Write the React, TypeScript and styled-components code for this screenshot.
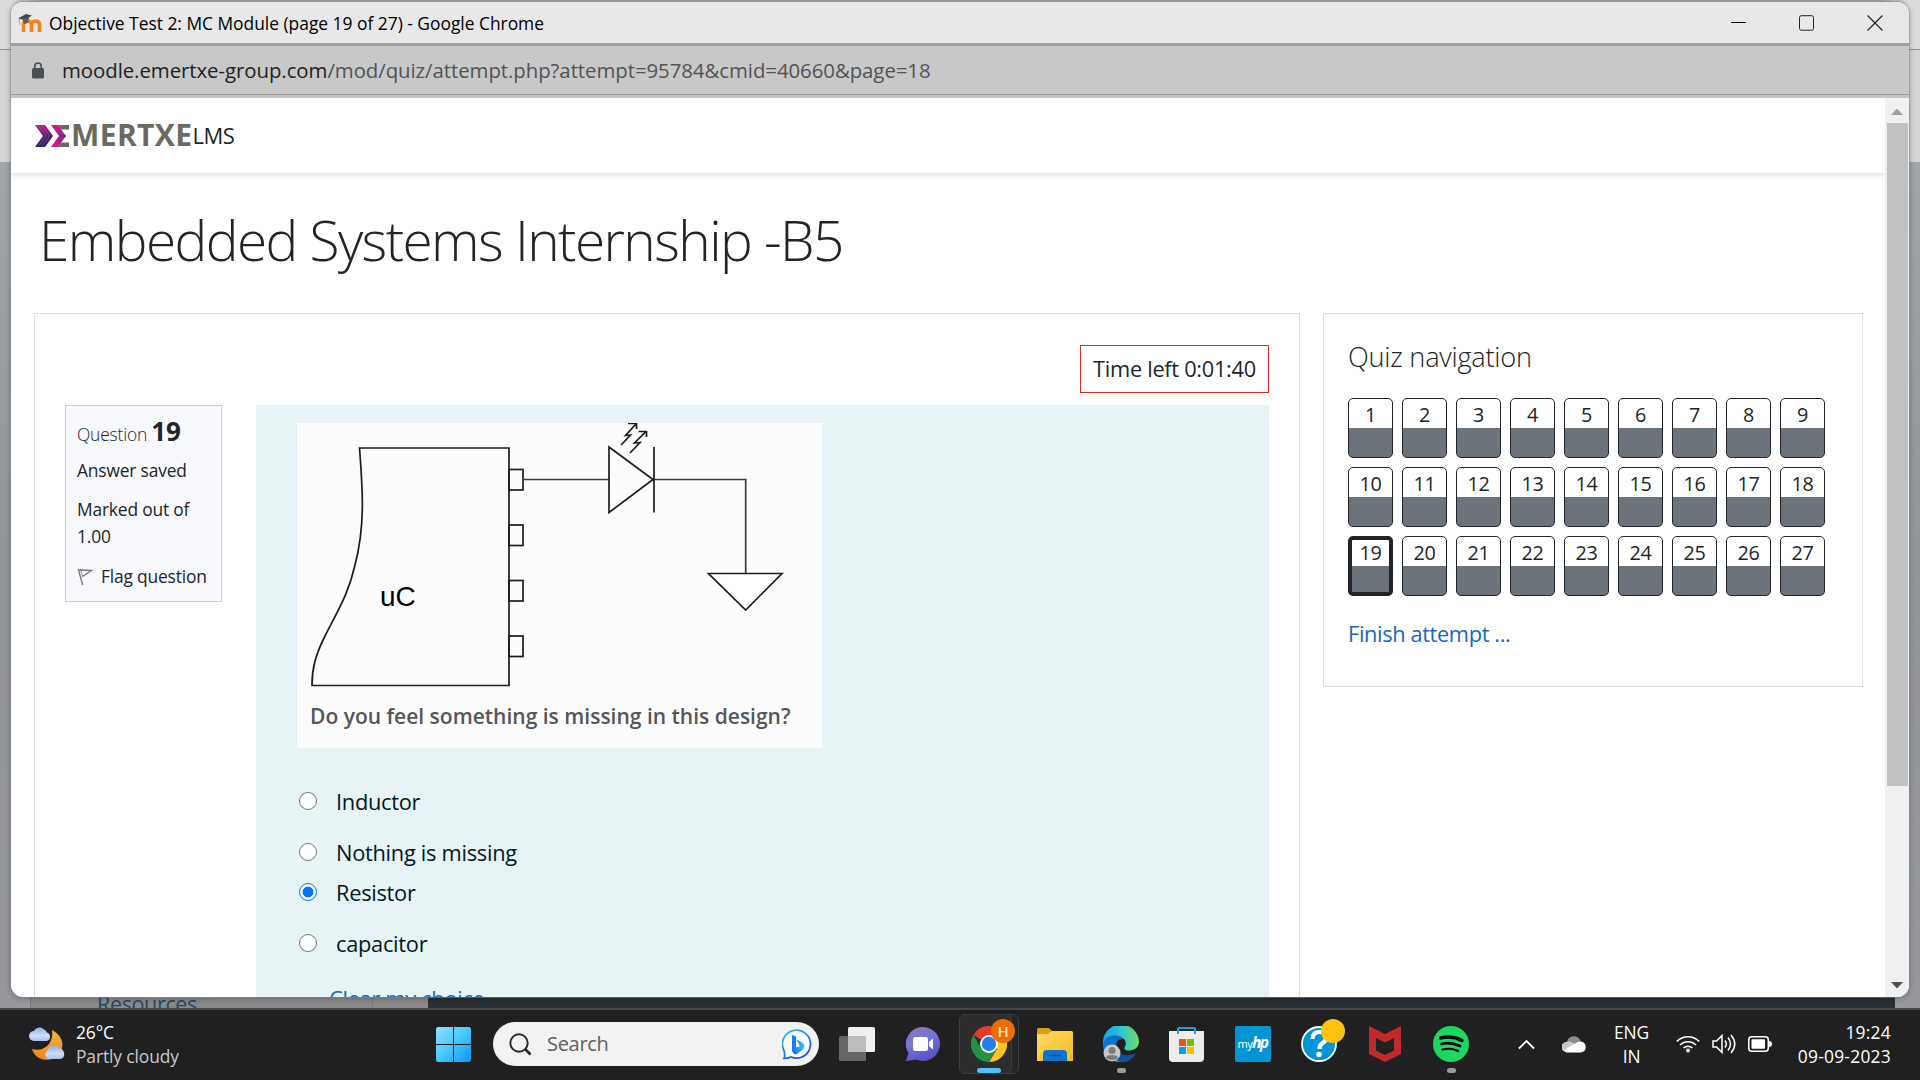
import React from "react";
import styled, { createGlobalStyle } from "styled-components";

const Global = createGlobalStyle`
  * { box-sizing: border-box; }
  body { margin: 0; overflow: hidden; background: #202020; font-family: "Open Sans", "Noto Sans", sans-serif; }
`;

const Screen = styled.div`
  width: 1920px;
  height: 1080px;
  display: flex;
  flex-direction: column;
  position: relative;
  overflow: hidden;
`;

/* ---------- browser window behind the popup ---------- */
const Backdrop = styled.div`
  height: 1008px;
  display: flex;
  flex-direction: column;
  overflow: hidden;
`;
const BackTabs = styled.div`
  height: 50px;
  flex: none;
  background: linear-gradient(90deg, #dcdcdc 0 11px, #a6a6a6 40px 1880px, #dcdcdc 1909px);
  border-bottom: 1px solid #8f8f8f;
`;
const BackTools = styled.div`
  height: 112px;
  flex: none;
  background: #d4d4d4;
`;
const BackPage = styled.div`
  flex: 1;
  display: flex;
  flex-direction: column;
  justify-content: flex-end;
  background: linear-gradient(#a1a5a8, #939699 50%, #97999c);
`;
const BackBottom = styled.div`
  height: 30px;
  display: flex;
`;
const BackSide = styled.div`
  width: 343px;
  margin-left: 30px;
  height: 30px;
  padding: 11px 0 0 66px;
  border: solid #77797b;
  border-width: 0 1px;
  background: #87898b;
  color: #234a66;
  font-size: 21.5px;
  line-height: 30px;
  letter-spacing: -0.35px;
  overflow: hidden;
`;
const BackMid = styled.div`
  width: 55px;
  background: #87898a;
`;
const BackDark = styled.div`
  flex: 1;
  margin-right: 25px;
  background: #2b3034;
`;

/* ---------- popup window ---------- */
const Popup = styled.div`
  position: absolute;
  left: 11px;
  top: 2px;
  width: 1898px;
  height: 995px;
  display: flex;
  flex-direction: column;
  border-radius: 12px;
  overflow: hidden;
  background: #fff;
`;
const PopupShadow = styled.div`
  position: absolute;
  left: 11px;
  top: 2px;
  width: 1898px;
  height: 995px;
  border-radius: 12px;
  box-shadow: 0 0 0 1px #8e8e8e80, 0 1px 6px #00000055;
`;
const TitleBar = styled.div`
  height: 44px;
  flex: none;
  display: flex;
  align-items: center;
  padding: 0 0 0 7px;
  background: #e8e8e8;
  border-bottom: 3px solid #a0a0a0;
`;
const TitleText = styled.div`
  flex: 1;
  margin-left: 7px;
  font-size: 17.4px;
  line-height: 24px;
  letter-spacing: -0.01px;
  color: #000;
`;
const WindowButtons = styled.div`
  display: flex;
  gap: 53px;
  margin-right: 26px;
`;
const AddressBar = styled.div`
  height: 52px;
  flex: none;
  display: flex;
  align-items: center;
  gap: 18px;
  padding: 0 20px 4px 21px;
  background: linear-gradient(#c8c8c8 48px, #999 48px 49px, #c4c4c4 49px);
`;
const Url = styled.div`
  font-size: 20.4px;
  line-height: 26px;
  letter-spacing: -0.06px;
  color: #505357;
  b { font-weight: 400; color: #202124; }
`;
const Viewport = styled.div`
  flex: 1;
  min-height: 0;
  display: flex;
`;
const Page = styled.div`
  width: 1874px;
  overflow: hidden;
`;
const Scrollbar = styled.div`
  width: 24px;
  display: flex;
  flex-direction: column;
  align-items: center;
  background: #f0f0f0;
`;
const Arrow = styled.div`
  height: 25px;
  padding-top: 10px;
  line-height: 0;
`;
const Thumb = styled.div`
  width: 21px;
  height: 663px;
  background: #c1c1c1;
  margin-bottom: auto;
`;

const SiteHeader = styled.header`
  height: 75px;
  display: flex;
  align-items: center;
  padding: 0 24px;
  background: #fff;
  box-shadow: 0 2px 6px rgba(0, 0, 0, 0.12);
`;
const Brand = styled.div`
  display: flex;
  align-items: center;
  height: 40px;
`;
const BrandName = styled.span`
  margin-left: 1px;
  padding-bottom: 2px;
  font-size: 30px;
  line-height: 38px;
  font-weight: 700;
  letter-spacing: 0.4px;
  color: #6a6a60;
`;
const BrandSuffix = styled.span`
  font-size: 22px;
  line-height: 38px;
  padding-bottom: 2px;
  letter-spacing: -0.5px;
  color: #212529;
`;
const CourseTitle = styled.h1`
  margin: 33px 0 0 28px;
  font-size: 55px;
  font-weight: 300;
  line-height: 67px;
  letter-spacing: -1.57px;
  color: #212529;
`;
const Columns = styled.div`
  display: flex;
  align-items: flex-start;
  gap: 23px;
  padding: 40px 22px 0 23px;
`;
const QuizCard = styled.section`
  width: 1266px;
  height: 900px;
  padding: 31px 30px;
  border: 1px solid #dedfe0;
`;
const TimerRow = styled.div`
  display: flex;
  justify-content: flex-end;
`;
const Timer = styled.div`
  width: 189px;
  height: 48px;
  border: 1px solid #ca3120;
  text-align: center;
  font-size: 21.8px;
  line-height: 46px;
  letter-spacing: -0.3px;
  color: #212529;
  white-space: nowrap;
`;
const QuestionRow = styled.div`
  display: flex;
  align-items: flex-start;
  gap: 34px;
  margin-top: 12px;
`;
const Info = styled.aside`
  width: 157px;
  height: 197px;
  padding: 10px 0 0 11px;
  border: 1px solid #cad0d7;
  background: #f8f9fc;
  color: #212529;
  font-size: 17.4px;
  line-height: 27px;
  letter-spacing: -0.18px;
  white-space: nowrap;
`;
const InfoNo = styled.h3`
  margin: 0 0 8px;
  font-size: 17.4px;
  line-height: 30px;
  font-weight: 300;
  span { font-size: 26px; font-weight: 700; line-height: 30px; letter-spacing: -0.3px; }
`;
const InfoText = styled.div`
  margin-bottom: 12px;
`;
const FlagRow = styled.div`
  display: flex;
  align-items: center;
  gap: 8px;
  margin-top: 13px;
`;
const Formulation = styled.div`
  flex: 1;
  height: 800px;
  padding: 18px 41px;
  background: #e7f3f5;
  color: #001a1e;
`;
const Figure = styled.div`
  width: 525px;
  height: 325px;
  background: #fcfcfc;
  svg { display: block; }
`;
const Caption = styled.div`
  padding-left: 13px;
  font-size: 21px;
  font-weight: 600;
  line-height: 30px;
  color: #55565a;
  white-space: nowrap;
`;
const Options = styled.div`
  margin-top: 36px;
`;
const Option = styled.label<{ $gap: number }>`
  display: flex;
  align-items: center;
  gap: 19px;
  height: 34px;
  margin: 0 0 ${(p) => p.$gap}px 2px;
  font-size: 21.8px;
  line-height: 32px;
  letter-spacing: -0.27px;
  span + span { padding-top: 2px; }
`;
const Radio = styled.span<{ $on?: boolean }>`
  width: 18px;
  height: 18px;
  border-radius: 50%;
  border: 1.5px solid ${(p) => (p.$on ? "#0075ff" : "#767676")};
  background: ${(p) => (p.$on ? "radial-gradient(circle, #0075ff 5px, #fff 5.8px)" : "#fff")};
`;
const ClearLink = styled.a`
  display: block;
  margin: 22px 0 0 32px;
  font-size: 21.8px;
  line-height: 34px;
  letter-spacing: -0.3px;
  color: #1a66bf;
`;

const NavCard = styled.aside`
  width: 540px;
  height: 374px;
  padding: 26px 24px;
  border: 1px solid #dedfe0;
`;
const NavTitle = styled.h5`
  margin: 0;
  font-size: 27.2px;
  font-weight: 300;
  line-height: 34px;
  letter-spacing: -0.25px;
  color: #212529;
`;
const NavGrid = styled.div`
  display: grid;
  grid-template-columns: repeat(9, 45px);
  gap: 9px;
  margin-top: 24px;
`;
const NavButton = styled.a<{ $current?: boolean }>`
  height: 60px;
  border: ${(p) => (p.$current ? "4px" : "1px")} solid #212529;
  border-radius: 5px;
  background: linear-gradient(#fff 30px, #6c737b 30px) border-box;
  text-align: center;
  font-size: 19.8px;
  line-height: ${(p) => (p.$current ? 26 : 32)}px;
  letter-spacing: -0.4px;
  color: #212529;
`;
const FinishLink = styled.a`
  display: block;
  margin-top: 21px;
  font-size: 21.8px;
  line-height: 34px;
  letter-spacing: -0.37px;
  color: #1a66bf;
`;

/* ---------- taskbar ---------- */
const Taskbar = styled.div`
  height: 72px;
  flex: none;
  display: flex;
  align-items: center;
  padding: 0 29px 2px 28px;
  background: #202020;
  border-top: 2px solid #454545;
  color: #fff;
  font-size: 17.4px;
  line-height: 24px;
  letter-spacing: -0.1px;
`;
const Weather = styled.div`
  width: 408px;
  display: flex;
  align-items: center;
  gap: 10px;
`;
const Lines = styled.div<{ $align?: string }>`
  text-align: ${(p) => p.$align || "left"};
  white-space: nowrap;
`;
const Dim = styled.div`
  color: #c8c8c8;
`;
const SearchBox = styled.div`
  width: 326px;
  height: 44px;
  margin: 0 5px 0 22px;
  padding: 0 6px 0 16px;
  display: flex;
  align-items: center;
  border-radius: 22px;
  background: #f2f2f2;
`;
const SearchText = styled.span`
  flex: 1;
  margin-left: 15px;
  font-size: 20px;
  letter-spacing: -0.3px;
  color: #606060;
`;
const Slot = styled.div`
  width: 66px;
  height: 60px;
  display: flex;
  align-items: center;
  justify-content: center;
  position: relative;
`;
const ActiveTile = styled.div`
  position: absolute;
  left: 3px;
  top: 0;
  width: 53px;
  height: 60px;
  border: 1px solid #3d3d3d;
  border-radius: 6px;
  background: #2d2d2d;
`;
const StackedTile = styled(ActiveTile)`
  left: 10px;
  background: #252525;
`;
const Layer = styled.div`
  position: relative;
  display: flex;
`;
const Badge = styled.div<{ $color: string }>`
  position: absolute;
  left: 35px;
  top: 5px;
  width: 24px;
  height: 24px;
  border-radius: 50%;
  background: ${(p) => p.$color};
  font-size: 15px;
  font-weight: 600;
  line-height: 24px;
  text-align: center;
  color: #f4e3d2;
`;
const Indicator = styled.div<{ $active?: boolean }>`
  position: absolute;
  left: ${(p) => (p.$active ? 21 : 29)}px;
  bottom: 1px;
  width: ${(p) => (p.$active ? 24 : 9)}px;
  height: 5px;
  border-radius: 3px;
  background: ${(p) => (p.$active ? "#4cc2ff" : "#9a9a9a")};
`;
const Tray = styled.div`
  flex: 1;
  display: flex;
  align-items: center;
  padding-left: 34px;
`;
const TrayItem = styled.div<{ $left: number }>`
  margin-left: ${(p) => p.$left}px;
  display: flex;
`;
const Clock = styled(Lines)`
  margin-left: auto;
  letter-spacing: 0.25px;
`;

const MoodleIcon = () => (
  <svg width="24" height="20" viewBox="0 0 24 20">
    <path d="M5.5 19V12q0-4 4-4t4 4v7M13.500 12q0-4 4-4t4 4v7" fill="none" stroke="#f98012" strokeWidth="3.6" />
    <path d="M0 5.500L8 1l6 1.500L7 7z" fill="#444" />
    <path d="M4 5h7l-1 5-4 1z" fill="#5d5d5d" />
    <path d="M1 5.500L2 12" stroke="#b98b62" strokeWidth=".8" />
  </svg>
);

const LockIcon = () => (
  <svg width="12" height="17" viewBox="0 0 12 17">
    <rect y="6" width="12" height="10.500" rx="1.500" fill="#4b4e52" />
    <path d="M2.800 7V4.200a3.200 3.200 0 0 1 6.400 0V7" fill="none" stroke="#4b4e52" strokeWidth="1.600" />
  </svg>
);

const BrandMark = () => (
  <svg width="35" height="22" viewBox="0 0 35 22">
    <defs>
      <linearGradient id="a" x2="0" y2="1"><stop stopColor="#c4177c" /><stop offset=".5" stopColor="#4a2068" /><stop offset="1" stopColor="#2b1f63" /></linearGradient>
      <linearGradient id="b" x2="0" y2="1"><stop stopColor="#e0147d" /><stop offset=".5" stopColor="#8b2390" /><stop offset="1" stopColor="#e0147d" /></linearGradient>
    </defs>
    <path d="M0 0h10l8 11-8 11H0l8-11z" fill="url(#a)" />
    <path d="M3 0l8 11-8 11M6.500 0l8 11-8 11" fill="none" stroke="#fff" strokeOpacity=".3" strokeWidth=".7" />
    <path d="M20 0h14v4.500h-8l5 6.500-5 6.500h8V22H20l8-11z" fill="#6a6a60" />
    <path d="M16 0h6l9 11-9 11h-6l8-11z" fill="url(#b)" />
  </svg>
);

const Circuit = () => (
  <svg width="525" height="278" viewBox="0 0 525 278" fill="none" stroke="#1c1c1c" strokeWidth="1.700">
    <path d="M62.500 25H212V262.500H15C15 246 18 233 28 213C40 189 52 170 58 142C68 104 66 70 62.500 25z" />
    {[46.5, 102, 157.5, 213].map((y) => (
      <rect key={y} x="212" y={y} width="14" height="20.500" />
    ))}
    <path d="M226 56.500H312M357 56.500H448.700V150.500" stroke="#3c3c3c" />
    <path d="M312 24V89.500L356 56.500zM357 24V89.500" />
    <path d="M411.500 150.500H485L448.700 187z" fill="#fff" />
    <path d="M324 22l9.500-10-5 .5L339 1M331 .5h8.500V6M333 30l10-10.500-5.500.5L349 8.500M341.500 8.500h8V14" />
    <text x="83" y="183" fill="#000" stroke="none" fontFamily="Liberation Sans, sans-serif" fontSize="28">uC</text>
  </svg>
);

const WeatherIcon = () => (
  <svg width="38" height="34" viewBox="0 0 38 34">
    <defs>
      <linearGradient id="moon" x2="0" y2="1"><stop stopColor="#e9b93a" /><stop offset="1" stopColor="#f5821f" /></linearGradient>
      <linearGradient id="cl" x2="0" y2="1"><stop stopColor="#8fb0ee" /><stop offset=".6" stopColor="#cfdcf7" /><stop offset="1" stopColor="#a9bff0" /></linearGradient>
    </defs>
    <path d="M24 3C36 9 38 22 28 30C18 36 7 32 4 22C15 25 26 18 24 3z" fill="url(#moon)" />
    <path d="M6 14a5 5 0 0 1 0-10 6 6 0 0 1 10-1.500 5 5 0 0 1 3 3 4.500 4.500 0 0 1 0 8.500z" fill="url(#cl)" />
    <path d="M20 32a5 5 0 0 1 0-9 6 6 0 0 1 11-1.500 5.500 5.500 0 0 1 2 10.500z" fill="url(#cl)" />
  </svg>
);

const WindowsLogo = () => (
  <svg width="35" height="35" viewBox="0 0 35 35">
    <defs><linearGradient id="win" x2="1" y2="1"><stop stopColor="#8be3ff" /><stop offset=".5" stopColor="#46c8ff" /><stop offset="1" stopColor="#0a96fb" /></linearGradient></defs>
    <path d="M1.500 0H17V17H0V1.500zM18 0h15.500L35 1.500V17H18zM0 18h17v17H1.500L0 33.500zM18 18h17v15.500L33.500 35H18z" fill="url(#win)" />
  </svg>
);

const BingIcon = () => (
  <svg width="31" height="31" viewBox="0 0 31 31">
    <defs>
      <linearGradient id="bing" x2=".6" y2="1"><stop stopColor="#22d0ee" /><stop offset="1" stopColor="#1b48c8" /></linearGradient>
      <linearGradient id="bingb" x1="1" x2="0"><stop stopColor="#35cfe8" /><stop offset="1" stopColor="#2161e6" /></linearGradient>
    </defs>
    <path d="M2 29.500c1-2 1-4 0-8A14 14 0 1 1 9 28c-3 1.500-4 1.500-7 1.500z" fill="#f7fbff" stroke="url(#bing)" strokeWidth="1.700" />
    <path d="M10 6l4 1.500v12L10 22z" fill="#1f7bea" />
    <path d="M10 21.500l4-3 4-1-2-4-1-3 6 3.500q3 3 0 6.500L15 25q-4 1-5-3.500z" fill="url(#bingb)" />
  </svg>
);

const TaskViewIcon = () => (
  <svg width="36" height="34" viewBox="0 0 36 34">
    <rect y="9" width="27" height="25" rx="1.500" fill="#666" />
    <rect x="9" width="27" height="25" rx="1.500" fill="#f0f0f0" />
    <path d="M9 9h18v16H9z" fill="#bdbdbd" />
  </svg>
);

const ChatIcon = () => (
  <svg width="34" height="34" viewBox="0 0 34 34">
    <defs><linearGradient id="chat" x2=".5" y2="1"><stop stopColor="#9272b4" /><stop offset=".5" stopColor="#7376d4" /><stop offset="1" stopColor="#5552c6" /></linearGradient></defs>
    <path d="M17 0a17 17 0 1 1-7 32.500L0 34l2.500-8A17 17 0 0 1 17 0z" fill="url(#chat)" />
    <rect x="7" y="10" width="15" height="14" rx="2.500" fill="#fff" />
    <path d="M23 15l4-3.500v11L23 19z" fill="#fff" />
  </svg>
);

const ChromeIcon = () => (
  <svg width="36" height="36" viewBox="0 0 36 36">
    <path d="M18 18L2.400 9A18 18 0 0 1 33.600 9z" fill="#e33b2e" />
    <path d="M18 9H33.600A18 18 0 0 1 18 36l8-13z" fill="#fcc31e" />
    <path d="M2.400 9A18 18 0 0 0 18 36L25.800 22.500 10.200 22.500z" fill="#229342" />
    <circle cx="18" cy="18" r="9" fill="#fff" />
    <circle cx="18" cy="18" r="7.200" fill="#2b7de9" />
  </svg>
);

const FolderIcon = () => (
  <svg width="36" height="33" viewBox="0 0 36 33">
    <defs><linearGradient id="fold" x2="1" y2="1"><stop stopColor="#ffdc6b" /><stop offset="1" stopColor="#f7b91c" /></linearGradient></defs>
    <path d="M0 1.500Q0 0 1.500 0H11q1 0 2 1l3 3v8H0z" fill="#dd9f0b" />
    <path d="M0 6h11l4-3h19.500Q36 3 36 4.500V33H0z" fill="url(#fold)" />
    <path d="M6 33v-7q0-4 4-4h16q4 0 4 4v7z" fill="#0b74cf" />
    <path d="M11 27.500h14" stroke="#0a4a94" strokeWidth="1.500" />
  </svg>
);

const EdgeIcon = () => (
  <svg width="36" height="36" viewBox="0 0 36 36">
    <defs>
      <linearGradient id="e1" x2="1"><stop stopColor="#1ba1e8" /><stop offset=".5" stopColor="#2fc3d8" /><stop offset="1" stopColor="#6be05a" /></linearGradient>
      <linearGradient id="e2" x2="0" y2="1"><stop stopColor="#0f6cc4" /><stop offset="1" stopColor="#1490e0" /></linearGradient>
    </defs>
    <path d="M0 18A18 18 0 0 1 36 15c0 6-4 9.500-10 9.500-4 0-5.500-1.500-4-4C26 13 15 7 8 12 4 13 1 16 0 18z" fill="url(#e1)" />
    <path d="M0 18C2 9 15 6 20 13c-6-1-8 5-6 11 2 7 7 10 10 11C10 40 0 30 0 18z" fill="url(#e2)" />
    <path d="M14 19c-3 9 9 13 19 8C29 35 22 37 18 36 10 34 9 24 14 19z" fill="#124f9c" />
    <circle cx="9" cy="27" r="8.500" fill="#c9c6c3" />
    <circle cx="9" cy="24.500" r="3.500" fill="#7d7a78" />
    <path d="M3 32q0-3 6-3t6 3q-6 4-12 0z" fill="#7d7a78" />
  </svg>
);

const StoreIcon = () => (
  <svg width="36" height="35" viewBox="0 0 36 35">
    <path d="M0 4h35v27q0 4-4 4H4q-4 0-4-4z" fill="#ececec" />
    <path d="M9 7V2q0-1 1-1h15q1 0 1 1v5" fill="none" stroke="#1f9fe8" strokeWidth="2" />
    <path d="M10 12h7v7h-7z" fill="#f25022" />
    <path d="M18 12h7v7h-7z" fill="#7fba00" />
    <path d="M10 20h7v7h-7z" fill="#00a4ef" />
    <path d="M18 20h7v7h-7z" fill="#ffb900" />
  </svg>
);

const MyHpIcon = () => (
  <svg width="36" height="36" viewBox="0 0 36 36">
    <rect width="36" height="36" rx="2" fill="#0096d6" />
    <text x="2.500" y="21.500" fontSize="11" fill="#fff" fontFamily="Open Sans, sans-serif" letterSpacing="-.4">my</text>
    <text x="17" y="22" fontSize="15.500" fontWeight="700" fontStyle="italic" fill="#fff" fontFamily="Open Sans, sans-serif" letterSpacing="-1.500">hp</text>
  </svg>
);

const HelpIcon = () => (
  <svg width="36" height="36" viewBox="0 0 36 36">
    <circle cx="18" cy="18" r="17" fill="#0096d6" stroke="#fff" strokeWidth="1.800" />
    <path d="M11.500 13q0-7 7-7t6.500 6q0 3-4 5.500-2.500 2-2.500 5.500" fill="none" stroke="#fff" strokeWidth="4.200" />
    <circle cx="18" cy="28.500" r="2.800" fill="#fff" />
  </svg>
);

const McAfeeIcon = () => (
  <svg width="32" height="36" viewBox="0 0 32 36">
    <path d="M0 0l16 8 16-8v28l-16 8-16-8zM7 12v12.500l9 4.500 9-4.500V12l-9 4.500z" fill="#c12a2b" fillRule="evenodd" />
  </svg>
);

const SpotifyIcon = () => (
  <svg width="36" height="36" viewBox="0 0 36 36">
    <circle cx="18" cy="18" r="18" fill="#1ed760" />
    <g fill="none" stroke="#0a0a0a" strokeLinecap="round">
      <path d="M7.500 12Q19 9 29 14.500" strokeWidth="3.400" />
      <path d="M8.500 18Q18 15.500 27 20" strokeWidth="2.800" />
      <path d="M9.500 23.500Q18 21.500 25 25" strokeWidth="2.200" />
    </g>
  </svg>
);

const options = [
  { text: "Inductor", gap: 17 },
  { text: "Nothing is missing", gap: 6 },
  { text: "Resistor", gap: 17, on: true },
  { text: "capacitor", gap: 0 },
];

export default function App() {
  return (
    <Screen>
      <Global />
      <Backdrop>
        <BackTabs />
        <BackTools />
        <BackPage>
          <BackBottom>
            <BackSide>Resources</BackSide>
            <BackMid />
            <BackDark />
          </BackBottom>
        </BackPage>
      </Backdrop>

      <PopupShadow />
      <Popup>
        <TitleBar>
          <MoodleIcon />
          <TitleText>Objective Test 2: MC Module (page 19 of 27) - Google Chrome</TitleText>
          <WindowButtons>
            <svg width="15" height="16"><path d="M0 7.500h15" stroke="#000" /></svg>
            <svg width="15" height="16"><rect x=".5" y=".7" width="14" height="14.500" rx="1.800" fill="none" stroke="#222" /></svg>
            <svg width="16" height="16"><path d="M.5 .5l15 15M15.500 .5l-15 15" stroke="#222" strokeWidth="1.200" /></svg>
          </WindowButtons>
        </TitleBar>
        <AddressBar>
          <LockIcon />
          <Url><b>moodle.emertxe-group.com</b>/mod/quiz/attempt.php?attempt=95784&amp;cmid=40660&amp;page=18</Url>
        </AddressBar>
        <Viewport>
          <Page>
            <SiteHeader>
              <Brand>
                <BrandMark />
                <BrandName>MERTXE</BrandName>
                <BrandSuffix>LMS</BrandSuffix>
              </Brand>
            </SiteHeader>
            <CourseTitle>Embedded Systems Internship -B5</CourseTitle>
            <Columns>
              <QuizCard>
                <TimerRow><Timer>Time left 0:01:40</Timer></TimerRow>
                <QuestionRow>
                  <Info>
                    <InfoNo>Question <span>19</span></InfoNo>
                    <InfoText>Answer saved</InfoText>
                    <InfoText>Marked out of<br />1.00</InfoText>
                    <FlagRow>
                      <svg width="16" height="18" viewBox="0 0 16 18" fill="none" stroke="#77797c" strokeWidth="1.400">
                        <path d="M1.200 1l4.500 16M2.500 2L14.500 2.500 5.500 8.500" />
                        <path d="M3 1l3 8" strokeWidth=".8" />
                      </svg>
                      Flag question
                    </FlagRow>
                  </Info>
                  <Formulation>
                    <Figure>
                      <Circuit />
                      <Caption>Do you feel something is missing in this design?</Caption>
                    </Figure>
                    <Options>
                      {options.map((o) => (
                        <Option key={o.text} $gap={o.gap}>
                          <Radio $on={o.on} />
                          <span>{o.text}</span>
                        </Option>
                      ))}
                    </Options>
                    <ClearLink>Clear my choice</ClearLink>
                  </Formulation>
                </QuestionRow>
              </QuizCard>
              <NavCard>
                <NavTitle>Quiz navigation</NavTitle>
                <NavGrid>
                  {Array.from({ length: 27 }, (_, i) => (
                    <NavButton key={i} $current={i === 18}>{i + 1}</NavButton>
                  ))}
                </NavGrid>
                <FinishLink>Finish attempt ...</FinishLink>
              </NavCard>
            </Columns>
          </Page>
          <Scrollbar>
            <Arrow><svg width="12" height="7"><path d="M0 7l6-6.500L12 7z" fill="#a0a0a0" /></svg></Arrow>
            <Thumb />
            <Arrow><svg width="12" height="7"><path d="M0 0l6 6.500L12 0z" fill="#505050" /></svg></Arrow>
          </Scrollbar>
        </Viewport>
      </Popup>

      <Taskbar>
        <Weather>
          <WeatherIcon />
          <Lines>
            <div>26°C</div>
            <Dim>Partly cloudy</Dim>
          </Lines>
        </Weather>
        <WindowsLogo />
        <SearchBox>
          <svg width="23" height="23" viewBox="0 0 23 23" fill="none" stroke="#2b2b2b">
            <circle cx="10" cy="10" r="8.700" strokeWidth="2" />
            <path d="M16 16l5.500 5.500" strokeWidth="2.800" />
          </svg>
          <SearchText>Search</SearchText>
          <BingIcon />
        </SearchBox>
        <Slot><TaskViewIcon /></Slot>
        <Slot><ChatIcon /></Slot>
        <Slot>
          <StackedTile />
          <ActiveTile />
          <Layer><ChromeIcon /></Layer>
          <Badge $color="#ee6c00">H</Badge>
          <Indicator $active />
        </Slot>
        <Slot><FolderIcon /></Slot>
        <Slot><EdgeIcon /><Indicator /></Slot>
        <Slot><StoreIcon /></Slot>
        <Slot><MyHpIcon /></Slot>
        <Slot><HelpIcon /><Badge $color="#ffc20e" /></Slot>
        <Slot><McAfeeIcon /></Slot>
        <Slot><SpotifyIcon /><Indicator /></Slot>
        <Tray>
          <svg width="17" height="11"><path d="M1 9.500l7.500-7.500L16 9.500" fill="none" stroke="#fff" strokeWidth="1.800" /></svg>
          <TrayItem $left={27}>
            <svg width="24" height="17" viewBox="0 0 24 17">
              <path d="M5 6a7 7 0 0 1 13.500-1l-6 6z" fill="#8b8b8b" />
              <path d="M5 16a5 5 0 0 1-1-10q4-1.500 8 1.500L18 11 6 16z" fill="#c9c9c9" />
              <path d="M2 14L15 6.500q5-2.500 8 1.500 2.500 7-4 8.500H5q-2 0-3-2.500z" fill="#fff" />
            </svg>
          </TrayItem>
          <TrayItem $left={28}>
            <Lines $align="center"><div>ENG</div><div>IN</div></Lines>
          </TrayItem>
          <TrayItem $left={27}>
            <svg width="24" height="18" viewBox="0 0 24 18" fill="none" stroke="#fff" strokeWidth="1.600">
              <path d="M.8 6.500a15.500 15.500 0 0 1 22.400 0M4 10a11.500 11.500 0 0 1 16 0M7.500 13a7 7 0 0 1 9 0" />
              <circle cx="12" cy="15.500" r="2" fill="#fff" stroke="none" />
            </svg>
          </TrayItem>
          <TrayItem $left={12}>
            <svg width="24" height="20" viewBox="0 0 24 20" fill="none" stroke="#fff" strokeWidth="1.500">
              <path d="M1 7h3.500L10 1.500v17L4.500 13H1zM13 6.500q2.500 3.500 0 7M16 3.500q5 6.500 0 13M19 1q7.500 9 0 18" />
            </svg>
          </TrayItem>
          <TrayItem $left={12}>
            <svg width="24" height="16" viewBox="0 0 24 16">
              <rect x=".8" y=".8" width="19.500" height="14.400" rx="3" fill="none" stroke="#fff" strokeWidth="1.500" />
              <rect x="3.500" y="3.300" width="13.500" height="9.400" rx="1" fill="#fff" />
              <path d="M21 5q3 0 3 3t-3 3z" fill="#fff" />
            </svg>
          </TrayItem>
          <Clock $align="right"><div>19:24</div><div>09-09-2023</div></Clock>
        </Tray>
      </Taskbar>
    </Screen>
  );
}
